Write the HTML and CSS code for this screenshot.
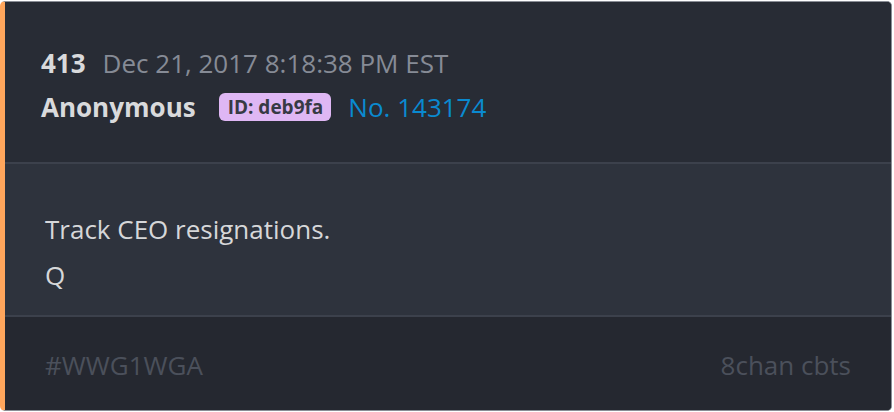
FILE: index.html
```html
<!DOCTYPE html>
<html>
<head>
<meta charset="utf-8">
<link rel="stylesheet" href="styles.css">
</head>
<body>
<div class="card">
  <div class="head">
    <div class="row1"><span class="num">413</span><span class="date">Dec 21, 2017 8:18:38 PM EST</span></div>
    <div class="row2"><span class="name">Anonymous</span><span class="badge">ID: deb9fa</span><span class="no">No. 143174</span></div>
  </div>
  <div class="body">
    <p>Track CEO resignations.</p>
    <p>Q</p>
  </div>
  <div class="foot">
    <span>#WWG1WGA</span><span>8chan cbts</span>
  </div>
</div>
</body>
</html>
```
FILE: styles.css
```css
html, body { margin: 0; padding: 0; background: #ffffff; }
body { font-family: "Open Sans", "Noto Sans", sans-serif; }
.card {
  width: 886px;
  height: 408px;
  margin-top: 1px;
  border: 1px solid #8a8e96;
  border-left: 5px solid #ffa65c;
  border-radius: 5px;
  overflow: hidden;
  display: flex;
  flex-direction: column;
  background: #282c35;
}
.head {
  background: #282c35;
  height: 162px;
  flex: none;
  box-sizing: border-box;
  padding: 39px 36px 0;
  border-bottom: 2px solid #3c414c;
}
.row1 { display: flex; align-items: baseline; font-size: 26px; line-height: 44px; }
.num { font-weight: 700; color: #d9dadc; margin-right: 17px; }
.date { color: #868b96; }
.row2 { display: flex; align-items: center; font-size: 26px; line-height: 44px; }
.name { font-weight: 700; color: #d9dadc; margin-right: 23px; }
.badge {
  background: #dfb7f4;
  color: #373a44;
  font-weight: 700;
  font-size: 19px;
  line-height: 28px;
  padding: 0 8px 0 9px;
  border-radius: 6px;
  margin-right: 17px;
}
.no { color: #0a8ad0; }
.body {
  background: #2e333d;
  height: 153px;
  flex: none;
  box-sizing: border-box;
  padding: 42px 40px 0;
  border-bottom: 2px solid #3c414c;
}
.body p { margin: 0; font-size: 26px; line-height: 46px; color: #d6d7d9; }
.foot {
  flex: 1;
  background: #252830;
  display: flex;
  justify-content: space-between;
  align-items: center;
  padding: 2px 40px 0;
  font-size: 26px;
  color: #4b505b;
}
```
